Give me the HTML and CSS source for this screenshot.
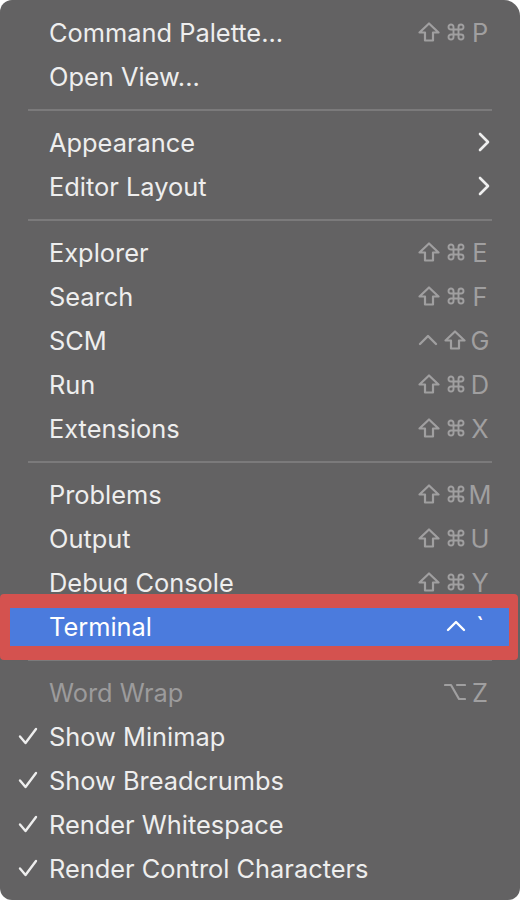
FILE: index.html
```html
<!DOCTYPE html>
<html>
<head>
<meta charset="utf-8">
<link rel="stylesheet" href="styles.css">
</head>
<body>
<div class="menu">
  <div class="row"><span class="check"></span><span class="label">Command Palette...</span><span class="keys"><span class="mods"><svg class="ic shift" viewBox="0 0 22 20"><path d="M11 1.5 L20.5 10.5 H15 V18.5 H7 V10.5 H1.5 Z"/></svg><svg class="ic cmd" viewBox="0 0 24 24"><path d="M15 6v12a3 3 0 1 0 3-3H6a3 3 0 1 0 3 3V6a3 3 0 1 0-3 3h12a3 3 0 1 0-3-3"/></svg></span><span class="key">P</span></span></div>
  <div class="row"><span class="check"></span><span class="label">Open View...</span></div>
  <div class="sep"></div>
  <div class="row"><span class="check"></span><span class="label">Appearance</span><span class="keys"><svg class="chev" viewBox="0 0 12 20"><path d="M2 2 L10 10 L2 18"/></svg></span></div>
  <div class="row"><span class="check"></span><span class="label">Editor Layout</span><span class="keys"><svg class="chev" viewBox="0 0 12 20"><path d="M2 2 L10 10 L2 18"/></svg></span></div>
  <div class="sep"></div>
  <div class="row"><span class="check"></span><span class="label">Explorer</span><span class="keys"><span class="mods"><svg class="ic shift" viewBox="0 0 22 20"><path d="M11 1.5 L20.5 10.5 H15 V18.5 H7 V10.5 H1.5 Z"/></svg><svg class="ic cmd" viewBox="0 0 24 24"><path d="M15 6v12a3 3 0 1 0 3-3H6a3 3 0 1 0 3 3V6a3 3 0 1 0-3 3h12a3 3 0 1 0-3-3"/></svg></span><span class="key">E</span></span></div>
  <div class="row"><span class="check"></span><span class="label">Search</span><span class="keys"><span class="mods"><svg class="ic shift" viewBox="0 0 22 20"><path d="M11 1.5 L20.5 10.5 H15 V18.5 H7 V10.5 H1.5 Z"/></svg><svg class="ic cmd" viewBox="0 0 24 24"><path d="M15 6v12a3 3 0 1 0 3-3H6a3 3 0 1 0 3 3V6a3 3 0 1 0-3 3h12a3 3 0 1 0-3-3"/></svg></span><span class="key">F</span></span></div>
  <div class="row"><span class="check"></span><span class="label">SCM</span><span class="keys"><span class="mods"><svg class="ic ctrl" viewBox="0 0 20 20"><path d="M2 14 L10 6 L18 14"/></svg><svg class="ic shift" viewBox="0 0 22 20"><path d="M11 1.5 L20.5 10.5 H15 V18.5 H7 V10.5 H1.5 Z"/></svg></span><span class="key">G</span></span></div>
  <div class="row"><span class="check"></span><span class="label">Run</span><span class="keys"><span class="mods"><svg class="ic shift" viewBox="0 0 22 20"><path d="M11 1.5 L20.5 10.5 H15 V18.5 H7 V10.5 H1.5 Z"/></svg><svg class="ic cmd" viewBox="0 0 24 24"><path d="M15 6v12a3 3 0 1 0 3-3H6a3 3 0 1 0 3 3V6a3 3 0 1 0-3 3h12a3 3 0 1 0-3-3"/></svg></span><span class="key">D</span></span></div>
  <div class="row"><span class="check"></span><span class="label">Extensions</span><span class="keys"><span class="mods"><svg class="ic shift" viewBox="0 0 22 20"><path d="M11 1.5 L20.5 10.5 H15 V18.5 H7 V10.5 H1.5 Z"/></svg><svg class="ic cmd" viewBox="0 0 24 24"><path d="M15 6v12a3 3 0 1 0 3-3H6a3 3 0 1 0 3 3V6a3 3 0 1 0-3 3h12a3 3 0 1 0-3-3"/></svg></span><span class="key">X</span></span></div>
  <div class="sep"></div>
  <div class="row"><span class="check"></span><span class="label">Problems</span><span class="keys"><span class="mods"><svg class="ic shift" viewBox="0 0 22 20"><path d="M11 1.5 L20.5 10.5 H15 V18.5 H7 V10.5 H1.5 Z"/></svg><svg class="ic cmd" viewBox="0 0 24 24"><path d="M15 6v12a3 3 0 1 0 3-3H6a3 3 0 1 0 3 3V6a3 3 0 1 0-3 3h12a3 3 0 1 0-3-3"/></svg></span><span class="key">M</span></span></div>
  <div class="row"><span class="check"></span><span class="label">Output</span><span class="keys"><span class="mods"><svg class="ic shift" viewBox="0 0 22 20"><path d="M11 1.5 L20.5 10.5 H15 V18.5 H7 V10.5 H1.5 Z"/></svg><svg class="ic cmd" viewBox="0 0 24 24"><path d="M15 6v12a3 3 0 1 0 3-3H6a3 3 0 1 0 3 3V6a3 3 0 1 0-3 3h12a3 3 0 1 0-3-3"/></svg></span><span class="key">U</span></span></div>
  <div class="row"><span class="check"></span><span class="label">Debug Console</span><span class="keys"><span class="mods"><svg class="ic shift" viewBox="0 0 22 20"><path d="M11 1.5 L20.5 10.5 H15 V18.5 H7 V10.5 H1.5 Z"/></svg><svg class="ic cmd" viewBox="0 0 24 24"><path d="M15 6v12a3 3 0 1 0 3-3H6a3 3 0 1 0 3 3V6a3 3 0 1 0-3 3h12a3 3 0 1 0-3-3"/></svg></span><span class="key">Y</span></span></div>
  <div class="row active"><span class="hl"></span><span class="mark"></span><span class="check"></span><span class="label">Terminal</span><span class="keys"><span class="mods"><svg class="ic ctrl" viewBox="0 0 20 20"><path d="M2 14 L10 6 L18 14"/></svg></span><span class="key">`</span></span></div>
  <div class="sep"></div>
  <div class="row disabled"><span class="check"></span><span class="label">Word Wrap</span><span class="keys"><span class="mods"><svg class="ic opt" viewBox="0 0 22 20"><path d="M1 3 H7 L15 17 H21 M13 3 H21"/></svg></span><span class="key">Z</span></span></div>
  <div class="row"><span class="check"><svg viewBox="0 0 20 18"><path d="M2 9.5 L7.5 16 L18 2"/></svg></span><span class="label">Show Minimap</span></div>
  <div class="row"><span class="check"><svg viewBox="0 0 20 18"><path d="M2 9.5 L7.5 16 L18 2"/></svg></span><span class="label">Show Breadcrumbs</span></div>
  <div class="row"><span class="check"><svg viewBox="0 0 20 18"><path d="M2 9.5 L7.5 16 L18 2"/></svg></span><span class="label">Render Whitespace</span></div>
  <div class="row"><span class="check"><svg viewBox="0 0 20 18"><path d="M2 9.5 L7.5 16 L18 2"/></svg></span><span class="label">Render Control Characters</span></div>
</div>
</body>
</html>
```
FILE: styles.css
```css
html, body {
  margin: 0;
  padding: 0;
  background: #ffffff;
}
.menu {
  width: 520px;
  height: 900px;
  box-sizing: border-box;
  padding-top: 11px;
  background: #636263;
  border-radius: 12px 16px 12px 12px;
  overflow: hidden;
  font-family: Inter, "Liberation Sans", sans-serif;
  font-size: 25.4px;
  color: #eeeeee;
}
.row {
  position: relative;
  height: 44px;
  box-sizing: border-box;
  padding-bottom: 2px;
  display: flex;
  align-items: center;
}
.check {
  width: 49px;
  display: flex;
  justify-content: flex-start;
  padding-left: 18px;
  box-sizing: border-box;
  position: relative;
}
.check svg {
  width: 20px;
  height: 18px;
  fill: none;
  stroke: #eeeeee;
  stroke-width: 2.4;
  stroke-linecap: round;
  stroke-linejoin: round;
}
.label {
  flex: 1;
  position: relative;
  white-space: nowrap;
}
.keys {
  display: flex;
  align-items: center;
  padding-right: 26px;
  position: relative;
  color: #a09fa0;
}
.mods {
  display: flex;
  align-items: center;
  gap: 6px;
}
.key {
  width: 28px;
  text-align: center;
}
.ic {
  fill: none;
  stroke: #a09fa0;
  stroke-width: 2.2;
  stroke-linejoin: round;
  stroke-linecap: round;
}
.shift { width: 22px; height: 20px; }
.cmd { width: 20px; height: 20px; stroke-width: 2.3; }
.ctrl { width: 20px; height: 20px; stroke-width: 2.4; }
.opt { width: 22px; height: 20px; }
.chev {
  width: 12px;
  height: 20px;
  margin-right: 4px;
  fill: none;
  stroke: #eeeeee;
  stroke-width: 2.6;
  stroke-linecap: round;
  stroke-linejoin: round;
}
.sep {
  height: 22px;
  display: flex;
  align-items: center;
  padding: 0 28px;
}
.sep::before {
  content: "";
  flex: 1;
  height: 2px;
  background: #7b7a7b;
}
.hl {
  position: absolute;
  left: 10px;
  right: 11px;
  top: 3px;
  bottom: 3px;
  background: #4b7bdd;
}
.mark {
  position: absolute;
  left: 0;
  right: 2px;
  top: -11px;
  bottom: -11px;
  border-style: solid;
  border-color: #d4524f;
  border-width: 14px 9px 14px 10px;
  border-radius: 4px;
  z-index: 2;
}
.active .keys, .active .label { color: #ffffff; }
.active .ic { stroke: #ffffff; }
.disabled .label { color: #9c9b9c; }
```
